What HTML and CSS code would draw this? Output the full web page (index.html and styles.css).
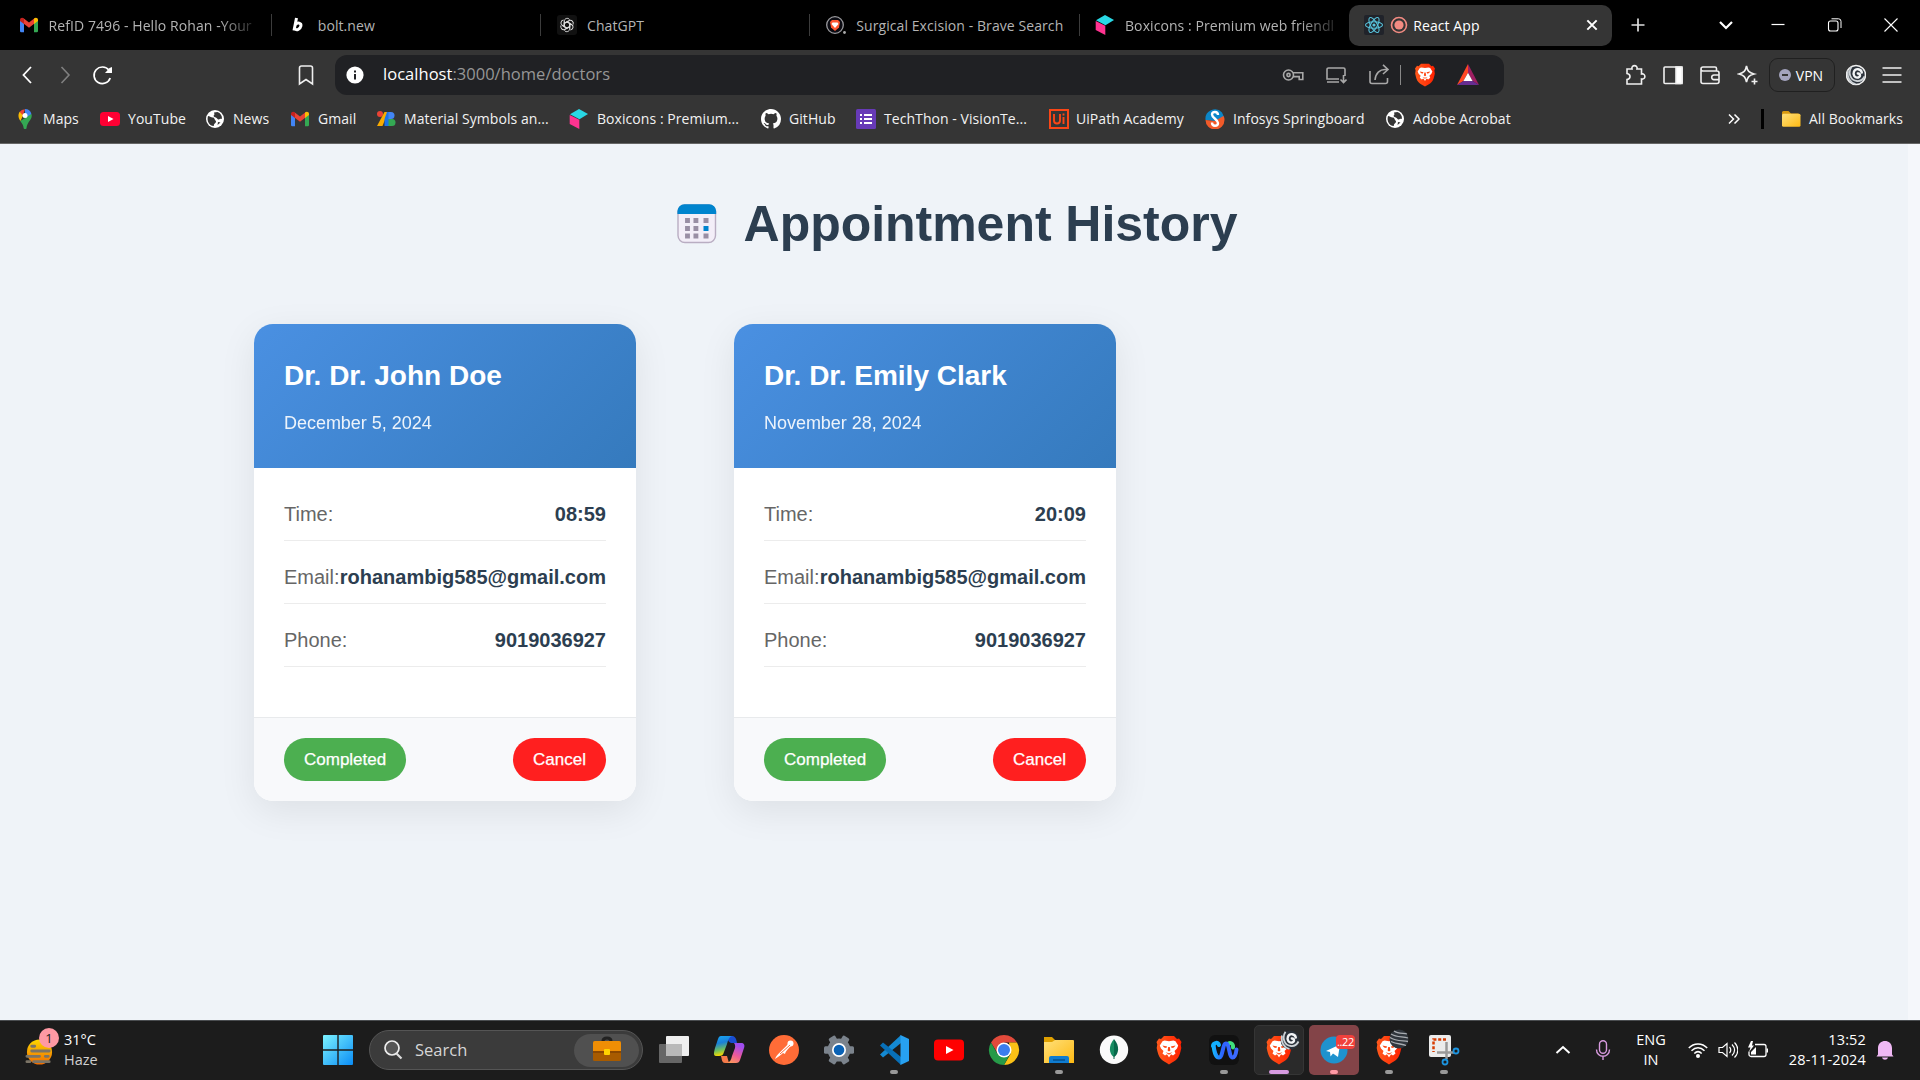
FILE: index.html
```html
<!DOCTYPE html>
<html lang="en">
<head>
<meta charset="utf-8">
<title>React App</title>
<link rel="stylesheet" href="styles.css">
</head>
<body>
<svg width="0" height="0" class="defs" aria-hidden="true">
  <defs>
    <linearGradient id="gBrave" x1="0" x2="1"><stop offset="0" stop-color="#ff5a1c"/><stop offset="1" stop-color="#ff2000"/></linearGradient>
    <linearGradient id="gWin" x1="0" y1="0" x2="1" y2="1"><stop offset="0" stop-color="#7cf3ff"/><stop offset="1" stop-color="#0a8cf5"/></linearGradient>
    <linearGradient id="gFold" x1="0" y1="0" x2="1" y2="1"><stop offset="0" stop-color="#ffe07a"/><stop offset="1" stop-color="#fdb913"/></linearGradient>
    <linearGradient id="gHaze" x1="0" y1="0" x2="0" y2="1"><stop offset="0" stop-color="#fcd800"/><stop offset="1" stop-color="#f06a00"/></linearGradient>
    <linearGradient id="gCoA" x1="0" y1="0" x2="0.2" y2="1"><stop offset="0" stop-color="#19a7f5"/><stop offset=".4" stop-color="#1a80d8"/><stop offset=".75" stop-color="#72c25a"/><stop offset="1" stop-color="#f5d800"/></linearGradient>
    <linearGradient id="gCoB" x1="0.4" y1="0" x2="0" y2="1"><stop offset="0" stop-color="#a04df0"/><stop offset=".5" stop-color="#ee5a98"/><stop offset="1" stop-color="#ffa44f"/></linearGradient>
    <linearGradient id="gWebex" gradientUnits="userSpaceOnUse" x1="2" x2="28" y1="0" y2="0"><stop offset="0" stop-color="#12c6ff"/><stop offset=".45" stop-color="#2d62ff"/><stop offset="1" stop-color="#3d6bff"/></linearGradient>
  </defs>
  <symbol id="gmail" viewBox="0 0 20 20">
    <path fill="#4285f4" d="M1 5v11a1.300 1.300 0 0 0 1.300 1.300H5V8z"/><path fill="#34a853" d="M19 5v11a1.300 1.300 0 0 1-1.300 1.300H15V8z"/>
    <path fill="#ea4335" d="M4.500 3.200 10 7.400l5.500-4.200v5.300L10 12.700 4.500 8.500z"/><path fill="#c5221f" d="M1 5c0-2.200 2.200-3 4-1.600V8.900L1 6z"/><path fill="#fbbc04" d="M19 5c0-2.200-2.200-3-4-1.600V8.900L19 6z"/>
  </symbol>
  <symbol id="boxicons" viewBox="0 0 20 20"><path fill="#29d8e5" d="M10 0l9 5-8.500 5.200L1 5.200z"/><path fill="#ff3390" d="M.7 6l9.600 4.800V20l-9.600-5z"/></symbol>
  <symbol id="globe" viewBox="0 0 20 20"><circle cx="10" cy="10" r="9" fill="#fff"/><path fill="#353535" d="M3 7c1.500 0 2.300 1 3.500 1.300 1 .2 2.700.2 3 1.700.3 1.400 1.700 1.500 1.500 2.800-.2 1.500-2 1.500-2.200 4.200-4 .2-7.500-4.500-5.800-10zM9 3.600l3.500-.5c3 1 4.700 3.700 4.500 6.900-1.600-.6-2.300.8-3.700.5-1.300-.3-1-1.700-2.500-2C8.500 8 8 6.500 9.500 5.500zM13 13l2.500.5-3 2.500z"/></symbol>
  <symbol id="brave" viewBox="0 0 26 30"><path fill="url(#gBrave)" d="M8 1h10l3 3 2-.5L25.500 7l-.8 2.500.6 3.500c-1 5-2 8.500-4.300 11-2 2-5 3.500-8 5.500-3-2-6-3.500-8-5.500C2.700 21.500 1.700 18 .7 13l.6-3.500L.5 7 3 3.500 5 4z"/><path fill="#fff" d="M8.500 5.500l4.500.8 4.500-.8 2 .8 2.700 4.200-1.200 3-2.500 2.500 1 2.500-2.500 2-2-1.200L13 22.500l-2-3.200-2 1.200-2.500-2 1-2.500L5 13.500l-1.200-3 2.700-4.200z"/><path fill="#ff4610" d="M6.500 10.500l4.700 1-1 1.500c-1.500 0-2.800-.8-3.700-2.500zM19.500 10.500l-4.700 1 1 1.500c1.500 0 2.800-.8 3.700-2.500zM12.200 12h1.600l.6 3.500-1.400 1-1.400-1zM9.500 17.300l3.500 1 3.500-1-3.500 2.500z"/></symbol>
  <symbol id="youtube" viewBox="0 0 20 20"><rect y="3" width="20" height="14" rx="3.500" fill="#ff0033"/><path fill="#fff" d="M8 7l5.500 3L8 13z"/></symbol>
  <symbol id="swirl" viewBox="0 0 20 20"><circle cx="10" cy="10" r="9.500" fill="#2b323b"/><path fill="none" stroke="#f2f4f6" stroke-width="2.400" stroke-linecap="round" d="M15.800 7.500C15 3.500 9.500 3 8 6.500s1 6.800 4.200 6c2.600-.7 2.300-4.200-.4-4"/><path fill="none" stroke="#cdd2d6" stroke-width="1.800" d="M5.500 1.800C1.500 8 4.500 15.500 11 16c3.500.3 6-1.500 7.500-4.500M2 5.500C.5 12 4 17.500 9.500 19"/></symbol>
</svg>

<header class="tabs">
  <div class="tab"><svg class="i20"><use href="#gmail"/></svg><span class="fade">RefID 7496 - Hello Rohan -Your</span></div>
  <div class="tab"><svg class="i20" viewBox="0 0 20 20"><path fill="none" stroke="#fff" stroke-width="3" d="M8.500 3L6 15.500M7.500 9.500c2-2.500 6-1.600 5.400 1.500S8.500 16 6.800 13.500"/></svg><span>bolt.new</span></div>
  <div class="tab"><svg class="i20" viewBox="0 0 20 20"><rect width="20" height="20" rx="3" fill="#111"/><g fill="none" stroke="#ddd" stroke-width="1"><g id="petal"><path d="M7.300 11.500V6.300c0-3 3.700-4 5.300-1.700M7.300 8.400l2.700-1.600 4.600 2.700"/></g><use href="#petal" transform="rotate(60 10 10)"/><use href="#petal" transform="rotate(120 10 10)"/><use href="#petal" transform="rotate(180 10 10)"/><use href="#petal" transform="rotate(240 10 10)"/><use href="#petal" transform="rotate(300 10 10)"/></g></svg><span>ChatGPT</span></div>
  <div class="tab"><svg class="i20" viewBox="0 0 20 20"><circle cx="9" cy="10" r="8.300" fill="#0b0b12" stroke="#9a9a9e" stroke-width="1.300"/><path fill="#ff5630" d="M6 5h6l2 2-1 5.500L9 16l-4-3.500L4 7z"/><path fill="#fff" d="M6.500 7.500h5l1 1.500L9 13 5.500 9z"/><circle cx="18.500" cy="17.500" r="1.400" fill="#aaa"/></svg><span>Surgical Excision - Brave Search</span></div>
  <div class="tab"><svg class="i20"><use href="#boxicons"/></svg><span class="fade">Boxicons : Premium web friendl</span></div>
  <div class="tab active"><svg class="i20" viewBox="0 0 20 20"><rect width="20" height="20" rx="2" fill="#20232a"/><g fill="none" stroke="#58c4dc" stroke-width="1.100"><ellipse cx="10" cy="10" rx="8.500" ry="3.300"/><ellipse cx="10" cy="10" rx="8.500" ry="3.300" transform="rotate(60 10 10)"/><ellipse cx="10" cy="10" rx="8.500" ry="3.300" transform="rotate(120 10 10)"/></g><circle cx="10" cy="10" r="1.600" fill="#58c4dc"/></svg><svg class="rec" viewBox="0 0 18 18"><circle cx="9" cy="9" r="7.500" fill="none" stroke="#f28b82" stroke-width="1.600"/><circle cx="9" cy="9" r="4.600" fill="#f28b82"/></svg><span>React App</span><svg class="tabx" viewBox="0 0 12 12"><path d="M2 2l8 8M10 2l-8 8" stroke="#fff" stroke-width="1.700"/></svg></div>
  <svg class="plus" viewBox="0 0 16 16"><path d="M8 1.500v13M1.500 8h13" stroke="#ddd" stroke-width="1.700"/></svg>
  <div class="winctl">
    <svg viewBox="0 0 16 16"><path d="M2 5l6 6 6-6" fill="none" stroke="#fff" stroke-width="2.200"/></svg>
    <svg viewBox="0 0 16 16"><path d="M1.500 7.500h13" stroke="#fff" stroke-width="1.200"/></svg>
    <svg viewBox="0 0 16 16"><path d="M4.500 1.800h7a2.500 2.500 0 0 1 2.500 2.500V11" fill="none" stroke="#fff"/><rect x="1.500" y="4" width="9.500" height="10" rx="2" fill="none" stroke="#fff" stroke-width="1.100"/></svg>
    <svg viewBox="0 0 16 16"><path d="M1.500 1.500l13 13M14.500 1.500l-13 13" stroke="#fff" stroke-width="1.100"/></svg>
  </div>
</header>

<nav class="toolbar">
  <div class="navbtns">
    <svg viewBox="0 0 22 22"><path d="M15 3L7.500 11l7.500 8" fill="none" stroke="#fff" stroke-width="1.800"/></svg>
    <svg viewBox="0 0 22 22"><path d="M7.500 3L15 11l-7.500 8" fill="none" stroke="#808080" stroke-width="1.600"/></svg>
    <svg viewBox="0 0 22 22"><path d="M17 6.300A8.300 8.300 0 1 0 18.200 14" fill="none" stroke="#fff" stroke-width="1.700"/><path d="M13 9h7V3l-2.500 1z" fill="#fff"/></svg>
  </div>
  <svg class="mark" viewBox="0 0 22 22"><path d="M4.500 4A2 2 0 0 1 6.500 2h9a2 2 0 0 1 2 2v16L11 15.500 4.500 20z" fill="none" stroke="#eee" stroke-width="1.600"/></svg>
  <div class="url">
    <svg class="info" viewBox="0 0 18 18"><circle cx="9" cy="9" r="8.600" fill="#fff"/><path d="M9 8v5.500M9 4.500v2" stroke="#202124" stroke-width="2"/></svg>
    <span class="addr"><b>localhost</b>:3000/home/doctors</span>
    <div class="urlicons">
      <svg viewBox="0 0 22 22"><circle cx="6.500" cy="11" r="5"/><circle cx="6.500" cy="11" r="1.600"/><path d="M11 8.800h9.800v6.700h-3.600v-2.900H11"/></svg>
      <svg viewBox="0 0 22 22"><path d="M20 12V5.500A1.500 1.500 0 0 0 18.500 4h-15A1.500 1.500 0 0 0 2 5.500V15h12M2 18h12M18.500 11v7M15.500 15.500l3 3 3-3"/></svg>
      <svg viewBox="0 0 22 22"><path d="M2 7v10.500a2 2 0 0 0 2 2h13.500a2 2 0 0 0 2-2V14M15 .8L20 5.500 15 10M20 5.500h-3c-5 0-9.500 3.500-10 10.500"/></svg>
      <i></i>
      <svg class="lion"><use href="#brave"/></svg>
      <svg class="bat" viewBox="0 0 24 24"><path stroke="none" fill="#ff4724" d="M12 0L0 23l7-4.500 5-9z"/><path stroke="none" fill="#9e1f63" d="M12 0l12 23-7-4.500-5-9z"/><path stroke="none" fill="#662d91" d="M0 23h24l-7-4.500H7z"/><path stroke="none" fill="#fff" d="M12 9.500l5 9H7z"/></svg>
    </div>
  </div>
  <div class="ext">
    <svg viewBox="0 0 22 22"><path d="M3 5h5c-1.200-4.500 6.200-4.500 5 0h4.500v5c4.500-1 4.500 6 0 5v5H3v-4.500c4-.5 4-5.500 0-6z"/></svg>
    <svg viewBox="0 0 22 22"><rect x="2" y="3" width="18" height="16.500" rx="1"/><path fill="#fff" d="M14 3h6v16.500h-6z"/></svg>
    <svg viewBox="0 0 22 22"><path d="M17.500 7V4.500A1.500 1.500 0 0 0 16 3H4a2 2 0 0 0 0 4h14a2 2 0 0 1 2 2v8.500a2 2 0 0 1-2 2H4a2 2 0 0 1-2-2V5M20 11h-5a2.300 2.300 0 0 0 0 4.600h5"/></svg>
    <svg viewBox="0 0 22 22"><path d="M9.500 2c1 5 2.500 6.700 7.500 8-5 1.300-6.500 3-7.500 8-1-5-2.500-6.700-7.500-8 5-1.300 6.500-3 7.500-8zM17.500 14.500v6M14.500 17.500h6"/></svg>
    <div class="vpn"><em></em><span>VPN</span></div>
    <svg class="swirl"><use href="#swirl"/></svg>
    <svg viewBox="0 0 22 22"><path d="M1.500 4h19M1.500 11h19M1.500 18h19"/></svg>
  </div>
</nav>

<nav class="bookmarks">
  <div class="list">
    <a><svg class="i20" viewBox="0 0 20 20"><path fill="#4285f4" d="M10 0a6.700 6.700 0 0 1 6.400 5L10 13z"/><path fill="#ea4335" d="M4.500 3A7 7 0 0 1 10 .2L7.700 7z"/><path fill="#fbbc04" d="M4.600 2.800L8 6.500 5.500 12c-1.500-2-3.200-5.500-.9-9.200z"/><path fill="#34a853" d="M16.500 5c1.500 5.500-4.500 7.500-5 14.200-.2 1.200-2.500 1.200-2.800 0-.4-3-1.700-5-3.400-7.200z"/><circle cx="10" cy="6.600" r="2.500" fill="#fff"/></svg>Maps</a>
    <a><svg class="i20"><use href="#youtube"/></svg>YouTube</a>
    <a><svg class="i20"><use href="#globe"/></svg>News</a>
    <a><svg class="i20"><use href="#gmail"/></svg>Gmail</a>
    <a><svg class="i20" viewBox="0 0 20 20"><circle cx="4" cy="5" r="3" fill="#ea4335"/><path fill="#f9ab00" d="M8.500 3H12L6.500 17H1z"/><path fill="#1a73e8" d="M13 3h-2L8.500 10v7H13z"/><path fill="#4285f4" d="M12.500 3h2.500a3.500 3.500 0 0 1 0 7h-2.500z"/><path fill="#34a853" d="M12.500 10H16a3.500 3.500 0 0 1 0 7h-3.500z"/></svg>Material Symbols an...</a>
    <a><svg class="i20"><use href="#boxicons"/></svg>Boxicons : Premium...</a>
    <a><svg class="i20" viewBox="0 0 16 16"><path fill="#fff" d="M8 0C3.580 0 0 3.580 0 8c0 3.540 2.290 6.530 5.470 7.590.4.070.55-.17.55-.38 0-.19-.01-.82-.01-1.490-2.010.37-2.530-.49-2.690-.94-.09-.23-.48-.94-.82-1.130-.28-.15-.68-.52-.01-.53.63-.01 1.080.58 1.230.82.72 1.210 1.870.87 2.330.66.07-.52.28-.87.51-1.070-1.780-.2-3.640-.89-3.640-3.950 0-.87.31-1.590.82-2.150-.08-.2-.36-1.020.08-2.120 0 0 .67-.21 2.200.82a7.400 7.400 0 0 1 4 0c1.530-1.040 2.200-.82 2.200-.82.44 1.100.16 1.920.08 2.120.51.56.82 1.270.82 2.150 0 3.070-1.870 3.750-3.650 3.950.29.25.54.73.54 1.480 0 1.070-.01 1.930-.01 2.200 0 .21.15.46.55.38A8 8 0 0 0 16 8c0-4.420-3.580-8-8-8z"/></svg>GitHub</a>
    <a><svg class="i20" viewBox="0 0 20 20"><rect width="20" height="20" rx="1.500" fill="#673ab7"/><path stroke="#fff" stroke-width="2" d="M4 6h2M8 6h8M4 10h2M8 10h8M4 14h2M8 14h8"/></svg>TechThon - VisionTe...</a>
    <a class="ui"><svg class="i20" viewBox="0 0 20 20"><rect x="1" y="1" width="18" height="18" fill="none" stroke="#fa4616" stroke-width="2"/><path fill="none" stroke="#fa4616" stroke-width="1.900" d="M5 5v6.500c0 4 6 4 6 0V5M14.500 8v7M14.500 4.500v2"/></svg>UiPath Academy</a>
    <a><svg class="i20" viewBox="0 0 20 20"><path fill="#0b86c8" d="M.5 11a9.500 9.500 0 0 1 16.500-7.500L19 8l-9 4z"/><path fill="#f15a29" d="M.5 11a9.500 9.500 0 0 0 19 0c0-2-.2-3-1.200-4L10 12z"/><path fill="none" stroke="#fff" stroke-width="2.400" d="M13 6c0-4-6-4-6-.5s6 5 6 8.500-6 4-6-.5"/></svg>Infosys Springboard</a>
    <a><svg class="i20"><use href="#globe"/></svg>Adobe Acrobat</a>
  </div>
  <svg class="more" viewBox="0 0 14 14"><path d="M2 2.500L6.500 7 2 11.500M7.500 2.500L12 7l-4.500 4.500" fill="none" stroke="#fff" stroke-width="1.500"/></svg>
  <i class="bsep"></i>
  <a class="all"><svg class="i20" viewBox="0 0 20 20"><path fill="#d99a10" d="M1 3.500A1.500 1.500 0 0 1 2.500 2h5L10 4.500h7.500V10H1z"/><rect x="1" y="4.800" width="18.500" height="13" rx="1.500" fill="url(#gFold)"/></svg>All Bookmarks</a>
</nav>

<main class="page">
  <h1><svg viewBox="0 0 40 40"><rect x="1" y="1" width="37.500" height="37.500" rx="7" fill="#f3eef8" stroke="#b9adc2" stroke-width="1.400"/><path fill="#0084ce" d="M.4 10V7A7 7 0 0 1 7.400.3h24.800a7 7 0 0 1 7 6.700v3z"/><g fill="#998ea4"><path d="M7 14h4.500v5H7zM14.800 14h4.500v5h-4.500zM22.600 14h0v5h0zM27.500 14H23v0zM7 22h4.500v5H7zM7 29.500h4.500v5H7zM14.800 29.500h4.500v5h-4.500zM14.800 22h4.500v5h-4.500z" transform="translate(.5 0) scale(1.080 1)" transform-origin="0 0"/><path d="M26.500 14h5v5h-5zM26.500 29.500h5v5h-5z"/></g><path fill="#0084ce" d="M26.500 22h5v5h-5z"/></svg>Appointment History</h1>
  <div class="cards">
    <article class="card">
      <div class="head"><h2>Dr. Dr. John Doe</h2><p>December 5, 2024</p></div>
      <div class="body">
        <div class="row"><span>Time:</span><strong>08:59</strong></div>
        <div class="row"><span>Email:</span><strong>rohanambig585@gmail.com</strong></div>
        <div class="row"><span>Phone:</span><strong>9019036927</strong></div>
      </div>
      <div class="foot"><button class="done">Completed</button><button class="cancel">Cancel</button></div>
    </article>
    <article class="card">
      <div class="head"><h2>Dr. Dr. Emily Clark</h2><p>November 28, 2024</p></div>
      <div class="body">
        <div class="row"><span>Time:</span><strong>20:09</strong></div>
        <div class="row"><span>Email:</span><strong>rohanambig585@gmail.com</strong></div>
        <div class="row"><span>Phone:</span><strong>9019036927</strong></div>
      </div>
      <div class="foot"><button class="done">Completed</button><button class="cancel">Cancel</button></div>
    </article>
  </div>
</main>

<footer class="taskbar">
  <div class="weather">
    <div class="wicon"><svg viewBox="0 0 30 30"><circle cx="15" cy="15" r="13" fill="url(#gHaze)"/><path stroke="#7b7466" stroke-width="3" stroke-linecap="round" d="M7 9h3M7 14h18M2 19.500h13M21 19.500h3M2 25h3M9 25h16"/></svg><em>1</em></div>
    <div><p>31°C</p><p class="dim">Haze</p></div>
  </div>
  <svg class="start" viewBox="0 0 30 30"><path fill="url(#gWin)" d="M0 1a1 1 0 0 1 1-1h13.300v14.300H0zM15.700 0H29a1 1 0 0 1 1 1v13.300H15.700zM0 15.700h14.300V30H1a1 1 0 0 1-1-1zM15.700 15.700H30V29a1 1 0 0 1-1 1H15.700z"/></svg>
  <div class="search">
    <svg class="glass" viewBox="0 0 20 20"><circle cx="9" cy="8" r="7" fill="#565656" stroke="#eee" stroke-width="1.700"/><path d="M13.500 13.500l5 5" stroke="#ddd" stroke-width="2.200"/></svg>
    <span>Search</span>
    <div class="case"><svg viewBox="0 0 30 24"><path d="M11 3c0-4 8-4 8 0" fill="none" stroke="#222" stroke-width="3"/><rect x="1" y="3" width="28" height="20" rx="1.500" fill="#a85b00"/><path fill="#ef8e05" d="M1 5a2 2 0 0 1 2-2h24a2 2 0 0 1 2 2v9H1z"/><path fill="#8b4800" d="M1 13h28v2H1z"/><rect x="12" y="11" width="6" height="6" rx="1" fill="#ffd400"/></svg></div>
  </div>
  <div class="apps">
    <div class="app"><svg viewBox="0 0 30 30"><path fill="#eee" d="M8 1h21a1 1 0 0 1 1 1v18a1 1 0 0 1-1 1H7V2a1 1 0 0 1 1-1z"/><path fill="#666" d="M0 10a1 1 0 0 1 1-1h22v18a1 1 0 0 1-1 1H1a1 1 0 0 1-1-1z"/><path fill="#b9b9b9" d="M7 9h16v12H7z"/></svg></div>
    <div class="app"><svg viewBox="0 0 30 30"><path fill="#194dd0" d="M13 1h5c3 0 4 2 5 7h-5c-3 0-4-2-5-7z"/><path fill="url(#gCoA)" d="M7 1h11c-3 1-4 4-5 8l-3 8c-1 3-2 4-5 4H2c-3 0-2-4-1-8L4 4c.7-2 1.500-3 3-3z"/><path fill="#f47a4a" d="M7 21h6l2 7h-4c-3 0-3-3-4-7z"/><path fill="url(#gCoB)" d="M20 8h7c3 0 4 2 3 5l-4 12c-.7 2-1.500 3-4 3h-9c3-1 4-3 5-7l3-8c.5-2 0-4-1-5z"/></svg></div>
    <div class="app"><svg viewBox="0 0 30 30"><circle cx="15" cy="15" r="15" fill="#ff6c37"/><path fill="#fff" d="M6 24c1-4 8-9 13-15l3 2c-4 4-5 5-6 8l-2-1c-2 2-5 4-8 6z"/><circle cx="21.500" cy="8.500" r="3" fill="#fff"/><path stroke="#ff6c37" d="M11 19l10-9"/></svg></div>
    <div class="app"><svg viewBox="0 0 30 30"><g fill="#7b838c"><circle cx="15" cy="15" r="11.500"/><g id="cog"><rect x="11.200" y="0" width="7.600" height="30" rx="1.500" transform="rotate(30 15 15)"/></g><use href="#cog" transform="rotate(60 15 15)"/><use href="#cog" transform="rotate(120 15 15)"/></g><circle cx="15" cy="15" r="7" fill="#fff"/><circle cx="15" cy="15" r="5.300" fill="#0a62b5"/></svg></div>
    <div class="app on"><svg viewBox="0 0 30 30"><path fill="#1489d2" d="M22 0L1 19.500 4 22.500 22 8z"/><path fill="#0870b8" d="M22 30L1 10.500 4 7.500 22 22z"/><path fill="#27a1f1" d="M21.500 0L30 4v22l-8.500 4z"/></svg></div>
    <div class="app"><svg viewBox="0 0 30 30"><rect y="4.500" width="30" height="21" rx="4" fill="#f00"/><path fill="#fff" d="M12 11l7.500 4-7.500 4z"/></svg></div>
    <div class="app"><svg viewBox="0 0 30 30"><path fill="#e24a3b" d="M2 7.500a15 15 0 0 1 26 0H15L9 19z"/><path fill="#fbc116" d="M28 7.500A15 15 0 0 1 15 30l6.500-11L20 7.500z"/><path fill="#269a48" d="M2 7.500L8.500 19 21 19 15 30A15 15 0 0 1 2 7.500z"/><circle cx="15" cy="15" r="7.500" fill="#fff"/><circle cx="15" cy="15" r="6" fill="#3b7ded"/></svg></div>
    <div class="app on"><svg viewBox="0 0 30 30"><path fill="#dfa000" d="M0 2h8l3 3v5H0z"/><path fill="url(#gFold)" d="M0 7h8l3-2h18a1 1 0 0 1 1 1v22H0z"/><path fill="#0f7cd0" d="M5 28v-5a2 2 0 0 1 2-2h16a2 2 0 0 1 2 2v5z"/><path stroke="#06508e" stroke-width="1.500" d="M9 25h12"/></svg></div>
    <div class="app"><svg viewBox="0 0 30 30"><circle cx="15" cy="14.700" r="14.200" fill="#fafafa"/><path fill="#08684a" d="M15 4c6 7 5 15 0 18z"/><path fill="#168c62" d="M15 4c-6 7-5 15 0 18z"/><path stroke="#08684a" d="M15 20v4"/></svg></div>
    <div class="app"><svg viewBox="0 0 30 30"><use href="#brave" x="2" width="26" height="30"/></svg></div>
    <div class="app on"><svg viewBox="0 0 30 30"><rect width="30" height="30" rx="6" fill="#111"/><g fill="none" stroke-width="4" stroke-linecap="round"><path stroke="#3fe07c" d="M18.500 9.500c2.500-3 6-1 5.500 3"/><path stroke="url(#gWebex)" d="M4.500 9.500C5 16 7 22.500 10 22.500c4 0 3.500-14 7-14s3 14 6.500 14c2.500 0 3.500-4 4-8"/><path stroke="#12b0ff" d="M4 11c1-4 5-4 6-1"/></g></svg></div>
    <div class="app on current"><svg viewBox="0 0 30 30"><use href="#brave" x="2" width="26" height="30"/></svg><svg class="mini"><use href="#swirl"/></svg></div>
    <div class="app on alert"><svg viewBox="0 0 30 30"><circle cx="15" cy="15" r="13.500" fill="#1f92ce"/><path fill="#fff" d="M7 16L21 9.500 19 22l-5-3.500-2.500 3L11 17z"/></svg><em>..22</em></div>
    <div class="app on"><svg viewBox="0 0 30 30"><use href="#brave" x="2" width="26" height="30"/></svg><svg class="mini" viewBox="0 0 20 20"><circle cx="10" cy="10" r="9.500" fill="#30363d"/><path fill="none" stroke="#a9adb2" stroke-width="1.300" d="M5 2c4 3 10 2 13 3M2 5c6 4 12 2 17 4M1 8.500c6 4 12 3 18 4M2 12.500c6 3 11 2 15 4"/></svg></div>
    <div class="app on"><svg viewBox="0 0 30 30"><rect width="22" height="22" rx="2" y="0" fill="#ececec"/><path fill="none" stroke="#d83b01" stroke-width="2.500" stroke-dasharray="3 1.800" d="M17 4.500H4.500V17"/><path stroke="#999" stroke-width="2.500" d="M17.500 7v17M8 17.500h17"/><g fill="none" stroke="#1c94e0" stroke-width="1.800"><circle cx="27" cy="16" r="2.500"/><circle cx="16" cy="27" r="2.500"/></g></svg></div>
  </div>
  <div class="tray">
    <svg class="t1" viewBox="0 0 20 20"><path d="M3.500 13L10 7l6.500 6" fill="none" stroke="#fff" stroke-width="2"/></svg>
    <svg class="t2" viewBox="0 0 20 20"><g fill="none" stroke="#d79ade" stroke-width="1.400"><rect x="6.500" y=".8" width="7" height="12.500" rx="3.500"/><path d="M3.500 9.500c0 9 13 9 13 0M10 16.500V20"/></g></svg>
    <p class="lang">ENG<br>IN</p>
    <svg class="t3" viewBox="0 0 20 20"><g fill="none" stroke="#fff" stroke-width="1.500"><path d="M.8 8c5-5.500 13.400-5.500 18.400 0M3.500 10.800c4-4 9-4 13 0M6.300 13.500c2.300-2.300 5.100-2.300 7.400 0"/></g><circle cx="10" cy="16" r="2" fill="#fff"/></svg>
    <svg class="t4" viewBox="0 0 20 20"><path d="M1 7.500h3.500L9 3.500v13l-4.500-4H1zM11.500 7c1.700 2 1.700 4 0 6M14 4.500c3.300 3.500 3.300 7.500 0 11M16.500 2.500c4.500 4.500 4.500 10.500 0 15" fill="none" stroke="#fff" stroke-width="1.200"/></svg>
    <svg class="t5" viewBox="0 0 20 20"><path d="M7 4.500h9a2 2 0 0 1 2 2v8a2 2 0 0 1-2 2H3a2 2 0 0 1-2-2v-3" fill="none" stroke="#fff" stroke-width="1.300"/><path fill="#fff" d="M18.500 8.500h1.500v4h-1.500zM3 1L0 7.500h2.500L1 12l5-6.500H4L5 1zM3 12l5-5v7.500H3z"/></svg>
    <p class="clock">13:52<br>28-11-2024</p>
    <svg class="t6" viewBox="0 0 20 20"><path fill="#efb8f4" d="M3 14.500V8c0-9.500 14-9.500 14 0v6.500l1.500 2h-17zM7 17.500h6c-1 3-5 3-6 0z"/></svg>
  </div>
</footer>
</body>
</html>
```
FILE: styles.css
```css
* { box-sizing: border-box; }
body { margin: 0; width: 1920px; height: 1080px; overflow: hidden; display: flex; flex-direction: column; background: #eff3f8; font: 14px "Open Sans", "Noto Sans", sans-serif; color: #fff; }
p, h1, h2 { margin: 0; }
svg { flex: none; display: block; }
em { font-style: normal; }
.defs { position: absolute; }
.i20 { width: 20px; height: 20px; }

.tabs { height: 50px; flex: none; background: #000; display: flex; align-items: center; padding-left: 3px; }
.tab { width: 269.250px; height: 22px; flex: none; display: flex; align-items: center; gap: 10px; padding: 0 15px 0 16px; border-right: 1px solid #3c3c3c; color: #b4b4b4; white-space: nowrap; letter-spacing: .08px; }
.tab:nth-child(-n+4) { margin-left: -.5px; margin-right: .5px; }
.tab:nth-child(5) { border: 0; margin-left: -1px; margin-right: 1px; }
.tab span { line-height: 20px; padding-top: 2px; }
.tab .fade { -webkit-mask-image: linear-gradient(90deg, #000 84%, #0004 99%); mask-image: linear-gradient(90deg, #000 84%, #0004 99%); }
.tab.active { width: 263px; height: 41px; border: 0; border-radius: 10px; background: #353535; color: #fff; padding: 0 13px 0 15px; gap: 0; }
.rec { width: 18px; height: 18px; margin: 0 5px 0 6px; }
.tabx { width: 14px; height: 14px; margin-left: auto; }
.plus { width: 16px; height: 16px; margin-left: 18px; }
.winctl { margin-left: auto; padding-right: 21px; display: flex; gap: 40.500px; }
.winctl svg { width: 16px; height: 16px; }
.winctl svg:first-child { margin-right: -4.500px; }

.toolbar { height: 50px; flex: none; background: #353535; display: flex; align-items: center; padding: 0 17px 0 16px; }
.navbtns { display: flex; gap: 16px; width: 279px; }
.navbtns svg, .mark { width: 22px; height: 22px; }
.url { margin-left: 18px; width: 1169px; height: 40px; border-radius: 12px; background: #202124; display: flex; align-items: center; padding: 0 24px 0 11px; }
.info { width: 18px; height: 18px; margin-right: 19px; }
.addr { font-size: 16.500px; line-height: 22px; padding-bottom: 2px; letter-spacing: .03px; color: #969696; }
.addr b { font-weight: 400; color: #fff; }
.urlicons { margin-left: auto; display: flex; align-items: center; gap: 21px; fill: none; stroke: #a8a8a8; stroke-width: 1.600; }
.urlicons svg { width: 22px; height: 22px; }
.urlicons i { width: 1px; height: 20px; background: #888; margin: 0 -8px 0 -11px; }
.urlicons .lion { width: 22px; height: 24px; stroke: none; }
.urlicons .bat { width: 24px; height: 22px; margin-left: -1px; }
.ext { margin-left: auto; display: flex; align-items: center; gap: 15.500px; fill: none; stroke: #f0f0f0; stroke-width: 1.600; }
.ext svg { width: 22px; height: 22px; }
.ext svg:nth-child(-n+4) { margin-left: -1px; margin-right: 1px; }
.ext .swirl { width: 20px; height: 22px; }
.vpn { width: 66px; height: 34px; border: 1px solid #202020; border-radius: 9px; display: flex; align-items: center; justify-content: center; gap: 5px; margin: 0 -5px 0 -6px; padding-right: 2px; }
.vpn em { width: 12px; height: 12px; border-radius: 50%; background: linear-gradient(#353535, #353535) center / 6px 2px no-repeat #a3a3bd; }

.bookmarks { height: 44px; flex: none; background: #353535; border-bottom: 1px solid #666; display: flex; align-items: center; padding: 0 17px 6px 15px; color: #f2f2f2; letter-spacing: .06px; }
.bookmarks a { display: flex; align-items: center; gap: 8px; white-space: nowrap; }
.bookmarks .ui { gap: 7px; }
.list { display: grid; grid-template-columns: 85px 105px 85px 86px 193px 192px 95px 193px 156px 180px 130px; }
.more { width: 14px; height: 14px; margin-left: auto; margin-right: 20px; }
.bsep { width: 3px; height: 20px; background: #000; margin-right: 17px; }

.page { height: 876px; flex: none; padding-top: 47px; font-family: "Liberation Sans", Arial, sans-serif; border-right: 12px solid #f5f7fb; }
h1 { display: flex; align-items: center; justify-content: center; gap: 27px; height: 66px; font-size: 50px; line-height: 66px; letter-spacing: -.03px; color: #2c3e50; padding-left: 6px; }
h1 svg { width: 40px; height: 40px; }
.cards { display: grid; grid-template-columns: 382px 382px; gap: 98px; margin: 67px 0 0 254px; }
.card { height: 477px; border-radius: 19px; overflow: hidden; background: #fff; box-shadow: 0 10px 37px rgba(0, 0, 0, .08); display: flex; flex-direction: column; }
.head { height: 144px; padding: 34px 30px 0; background: linear-gradient(135deg, #4a90e2, #357abd); }
h2 { font-size: 28px; line-height: 36px; }
.head p { font-size: 18px; line-height: 22px; margin-top: 18px; opacity: .9; letter-spacing: -.03px; }
.body { flex: 1; padding: 30px 30px 0; }
.row { display: flex; justify-content: space-between; height: 43px; margin-bottom: 20px; padding-top: 3px; font-size: 20px; line-height: 26px; border-bottom: 1px solid #ececec; color: #666; }
.row strong { color: #2c3e50; }
.foot { height: 84px; border-top: 1px solid #e8eaec; background: #f8f9fb; display: flex; justify-content: space-between; align-items: center; padding: 0 30px 1px; }
.foot button { height: 43px; border: 0; border-radius: 22px; padding: 2px 20px 0; font: 17px "Liberation Sans", Arial, sans-serif; color: #fff; -webkit-text-stroke: .25px #fff; }
.done { background: #4caf50; }
.cancel { background: #ff1f1f; }

.taskbar { height: 60px; flex: none; background: #1c1c1c; border-top: 1px solid #4a4d50; display: flex; align-items: center; padding-bottom: 1px; font-size: 14.500px; line-height: 20px; }
.weather { width: 322.500px; padding-left: 25px; display: flex; gap: 10px; }
.wicon { position: relative; width: 29px; }
.wicon svg { width: 29px; height: 30px; margin-top: 7px; }
.wicon em { position: absolute; left: 14px; top: -2px; width: 20px; height: 20px; border-radius: 50%; background: #ff99a4; color: #222; text-align: center; font-size: 13px; }
.dim { color: #d0d0d0; }
.start { width: 30px; height: 30px; }
.search { margin-left: 16.500px; width: 274px; height: 40px; border-radius: 20px; border: 1px solid #555; background: #3b3b3b; display: flex; align-items: center; padding: 0 3px 0 13px; color: #d6d6d6; font-size: 16.500px; }
.glass { width: 20px; height: 20px; margin-right: 12px; }
.case { margin-left: auto; width: 65px; height: 33px; border-radius: 17px; background: #505050; display: grid; place-items: center; }
.case svg { width: 30px; height: 24px; overflow: visible; }
.apps { margin-left: 6px; display: grid; grid-template-columns: repeat(15, 50px); gap: 5px; }
.app { position: relative; height: 50px; border-radius: 5px; display: grid; place-items: center; }
.app svg { width: 30px; height: 30px; overflow: visible; }
.app.on::after { content: ""; position: absolute; bottom: 1px; left: 21px; width: 8px; height: 4px; border-radius: 2px; background: #999; }
.app.current { background: #2a2a2a; border: 1px solid #353535; }
.app.current::after { left: 14px; bottom: 0; width: 20px; background: #d79ae0; }
.app.alert { background: #834448; }
.app.alert::after { background: #ff99a4; }
.app .mini { position: absolute; left: 25px; top: 4px; width: 20px; height: 20px; }
.app em { position: absolute; left: 27px; top: 10px; width: 19px; height: 14px; border-radius: 4px; background: #f0403c; font-size: 11px; line-height: 14px; text-align: center; letter-spacing: -.4px; }
.tray { margin-left: auto; display: flex; align-items: center; padding-right: 25px; }
.tray svg { width: 20px; height: 20px; }
.tray .t2 { margin-left: 20px; }
.lang { width: 40px; margin-left: 18px; text-align: center; }
.tray .t3 { margin-left: 17px; }
.tray .t4, .tray .t5 { margin-left: 10px; }
.clock { width: 98px; text-align: right; letter-spacing: .15px; }
.tray .t6 { margin-left: 9px; }
```
